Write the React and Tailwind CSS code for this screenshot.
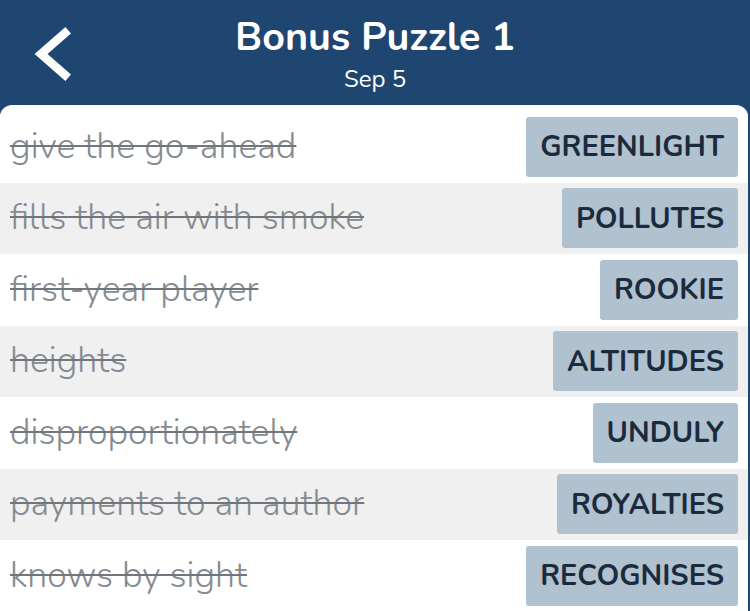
const rows = [
  { clue: "give the go-ahead", answer: "GREENLIGHT" },
  { clue: "fills the air with smoke", answer: "POLLUTES" },
  { clue: "first-year player", answer: "ROOKIE" },
  { clue: "heights", answer: "ALTITUDES" },
  { clue: "disproportionately", answer: "UNDULY" },
  { clue: "payments to an author", answer: "ROYALTIES" },
  { clue: "knows by sight", answer: "RECOGNISES" },
];

export default function App() {
  return (
    <div className="w-[750px] h-[611px] overflow-hidden bg-[#1f4571] font-['Nunito','Lato',sans-serif]">
      {/* header */}
      <div className="relative h-[105px] flex flex-col items-center text-white">
        <svg
          className="absolute left-[30px] top-[26px]"
          width="44"
          height="56"
          viewBox="0 0 44 56"
        >
          <polyline
            points="35,7 11,28 35,49"
            fill="none"
            stroke="white"
            strokeWidth="8.5"
            strokeLinecap="square"
          />
        </svg>
        <h1 className="mt-[12px] text-[39.5px] leading-[50px] font-bold">Bonus Puzzle 1</h1>
        <p className="mt-[1px] text-[24px] leading-[32px]">Sep 5</p>
      </div>

      {/* list */}
      <div className="w-[748px] h-[506px] bg-white rounded-t-[12px] pt-[6px] overflow-hidden">
        {rows.map((r, i) => (
          <div
            key={i}
            className={`h-[71.5px] flex items-center justify-between pl-[10px] pr-[10px] ${
              i % 2 === 1 ? "bg-[#f0f0f0]" : "bg-white"
            }`}
          >
            <span className="text-[35.7px] font-light text-[#868b92] line-through decoration-[2px] decoration-[#70767e]">
              {r.clue}
            </span>
            <span className="h-[60px] flex items-center px-[14px] rounded-[3px] bg-[#b0c1cf] text-[#1b2b3d] text-[29px] font-bold">
              {r.answer}
            </span>
          </div>
        ))}
      </div>
    </div>
  );
}
